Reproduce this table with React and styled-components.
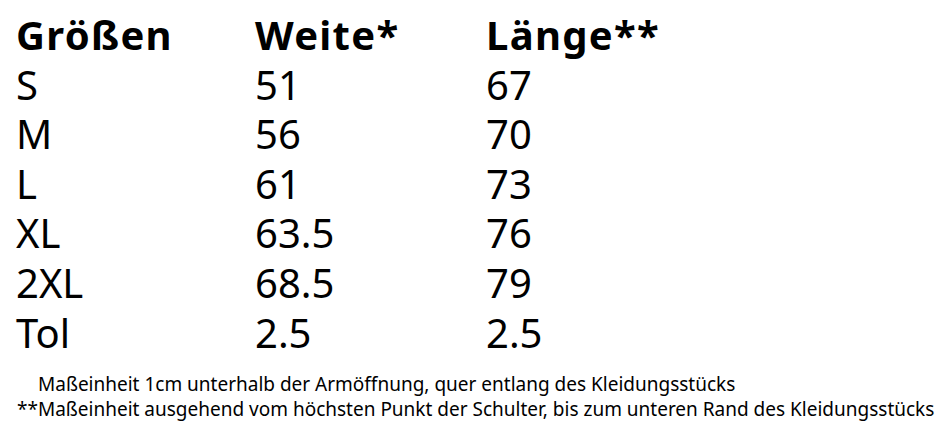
import React from "react";
import styled, { createGlobalStyle } from "styled-components";

const GlobalStyle = createGlobalStyle`
  html, body {
    margin: 0;
    padding: 0;
    background: #ffffff;
  }
  body {
    font-family: "Noto Sans", "Open Sans", sans-serif;
    color: #000000;
  }
`;

const Page = styled.div`
  width: 950px;
  height: 436px;
  padding: 10px 0 0 16px;
  box-sizing: border-box;
  background: #ffffff;
`;

const Table = styled.div`
  display: grid;
  grid-template-columns: 239px 231px auto;
  font-size: 40px;
  line-height: 49.6px;
`;

const Cell = styled.div`
  font-weight: ${({ head }) => (head ? 700 : 400)};
  letter-spacing: ${({ head }) => (head ? "1.3px" : "0")};
  white-space: nowrap;
`;

const Notes = styled.div`
  margin-top: 15px;
  font-size: 19px;
  line-height: 25px;
`;

const Note = styled.div`
  padding-left: ${({ indent }) => indent || 0}px;
  white-space: nowrap;
`;

const header = ["Größen", "Weite*", "Länge**"];

const rows = [
  ["S", "51", "67"],
  ["M", "56", "70"],
  ["L", "61", "73"],
  ["XL", "63.5", "76"],
  ["2XL", "68.5", "79"],
  ["Tol", "2.5", "2.5"],
];

const App = () => {
  return (
    <>
      <GlobalStyle />
      <Page>
        <Table>
          {header.map((h) => (
            <Cell head key={h}>
              {h}
            </Cell>
          ))}
          {rows.map((row) =>
            row.map((v, i) => <Cell key={row[0] + i}>{v}</Cell>)
          )}
        </Table>
        <Notes>
          <Note indent={22}>
            Maßeinheit 1cm unterhalb der Armöffnung, quer entlang des Kleidungsstücks
          </Note>
          <Note indent={1}>
            **Maßeinheit ausgehend vom höchsten Punkt der Schulter, bis zum unteren Rand des Kleidungsstücks
          </Note>
        </Notes>
      </Page>
    </>
  );
};

export default App;
